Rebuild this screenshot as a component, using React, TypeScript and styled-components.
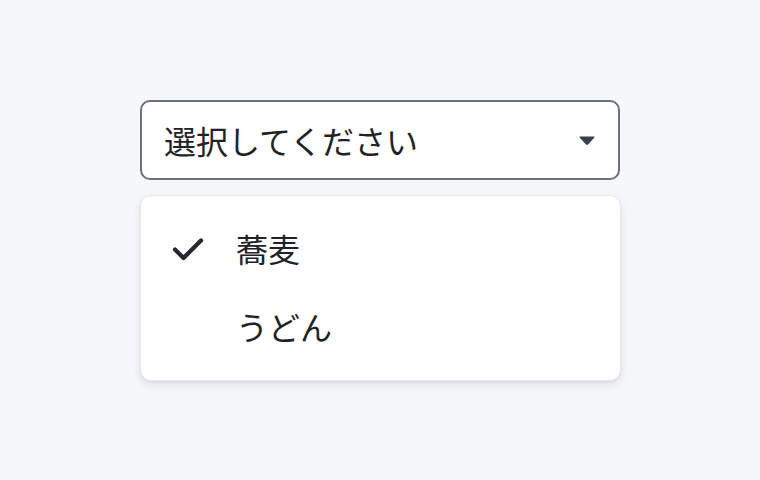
import React from "react";
import styled, { createGlobalStyle } from "styled-components";

const Global = createGlobalStyle`
  html, body { margin: 0; padding: 0; background: #f6f7f9; }
  body { font-family: "Noto Sans CJK JP", "Noto Sans", sans-serif; color: #1f2328; }
`;

const Page = styled.div`
  width: 760px;
  height: 480px;
  box-sizing: border-box;
  padding: 100px 140px 0 140px;
  display: flex;
  flex-direction: column;
`;

const Trigger = styled.button`
  box-sizing: border-box;
  width: 480px;
  height: 80px;
  border: 2px solid #6b7280;
  border-radius: 10px;
  background: #ffffff;
  display: flex;
  align-items: center;
  justify-content: space-between;
  padding: 0 22px 0 22px;
  font-family: inherit;
  font-size: 32px;
  color: #1f2328;
  cursor: pointer;
`;

const Label = styled.span`
  line-height: 1;
  margin-top: -1px;
`;

const Caret = styled.svg`
  width: 18px;
  height: 11px;
  display: block;
`;

const Menu = styled.ul`
  box-sizing: border-box;
  list-style: none;
  margin: 15px 0 0 0;
  width: 481px;
  padding: 14px 0;
  background: #ffffff;
  border: 1px solid #e7e9ec;
  border-radius: 11px;
  box-shadow: 0 4px 8px rgba(30, 40, 60, 0.1), 0 1px 2px rgba(30, 40, 60, 0.06);
`;

const Item = styled.li`
  display: flex;
  align-items: center;
  height: 78px;
  padding-left: 31px;
  font-size: 32px;
  color: #1f2328;
`;

const CheckBox = styled.span`
  width: 32px;
  height: 32px;
  margin-right: 32px;
  display: flex;
  align-items: center;
  justify-content: center;
`;

const ItemText = styled.span`
  line-height: 1;
  margin-top: -2px;
`;

const Check = () => (
  <svg width="32" height="24" viewBox="0 0 32 24">
    <path d="M3 12.5 L11.5 21 L29 3.5" fill="none" stroke="#24292f" strokeWidth="4.2" strokeLinecap="round" strokeLinejoin="round" />
  </svg>
);

export default function App() {
  return (
    <>
      <Global />
      <Page>
        <Trigger>
          <Label>選択してください</Label>
          <Caret viewBox="0 0 18 11">
            <path d="M2.2 1.5 H15.8 Q17.2 1.5 16.2 2.8 L10 9.4 Q9 10.3 8 9.4 L1.8 2.8 Q0.8 1.5 2.2 1.5 Z" fill="#3a4049" />
          </Caret>
        </Trigger>
        <Menu>
          <Item>
            <CheckBox><Check /></CheckBox>
            <ItemText>蕎麦</ItemText>
          </Item>
          <Item>
            <CheckBox />
            <ItemText>うどん</ItemText>
          </Item>
        </Menu>
      </Page>
    </>
  );
}
